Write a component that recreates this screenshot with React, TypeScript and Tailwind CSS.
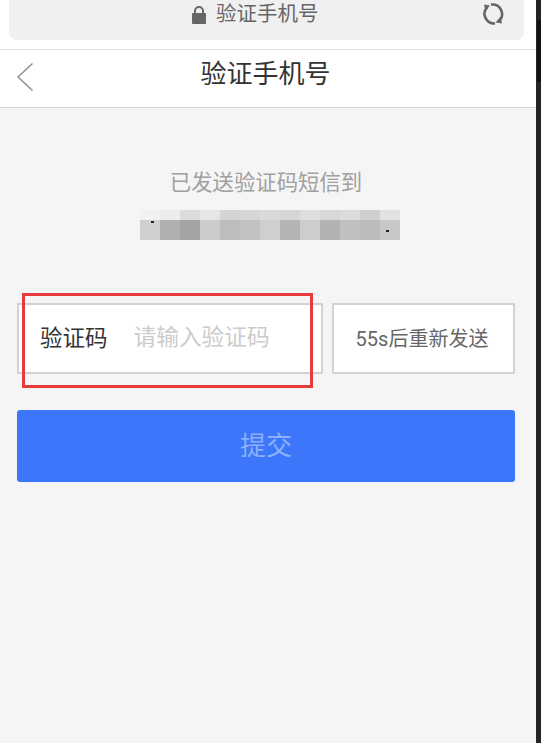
import React from 'react';

const cjk = "font-['Roboto','Noto_Sans_CJK_SC',sans-serif]";

// blurred phone number, pixel blocks
const topRow = ['#f1f1f1', '#ececec', '#dcdcdc', '#e6e6e6', '#d4d4d4', '#d6d6d6', '#dadada', '#d6d6d6', '#dedede', '#d8d8d8', '#dcdcdc', '#cfcfcf', '#e2e2e2'];
const bottomRow = ['#d0d0d0', '#b0b0b0', '#a4a4a4', '#cccccc', '#bdbdbd', '#c2c2c2', '#cfcfcf', '#b4b4b4', '#cdcdcd', '#b2b2b2', '#c0c0c0', '#bcbcbc', '#c8c8c8'];

const App: React.FC = () => {
  return (
    <div className={`${cjk} w-[541px] h-[743px] flex overflow-hidden bg-[#242424]`}>
      <div className="w-[536px] shrink-0 flex flex-col bg-[#f5f5f5]">
        <div className="bg-white h-[50px] shrink-0 pl-[9px] pr-[12px] border-b border-[#e4e4e4]">
          <div className="h-[40px] rounded-b-lg bg-[#f0f0f0] flex items-center pl-[183px] pr-[19px]">
            <div className="flex items-center gap-[10px] text-[20.5px] text-[#666666] pb-[11px]">
              <svg width="14" height="20" viewBox="0 0 14 20">
                <path d="M3 9V6a4 4 0 0 1 8 0v3" fill="none" stroke="#666666" strokeWidth="2" />
                <rect x="0" y="8" width="14" height="11" rx="1" fill="#666666" />
              </svg>
              <span>验证手机号</span>
            </div>
            <svg className="ml-auto mb-[12px]" width="24" height="24" viewBox="0 0 24 24" fill="none">
              <path d="M6 5.5A9.6 9.6 0 0 0 14 21.4" stroke="#666666" strokeWidth="2.6" />
              <path d="M10 2.6A9.6 9.6 0 0 1 19 18" stroke="#666666" strokeWidth="2.6" />
              <path d="M3 2.5l6 1-4.5 5.5z" fill="#666666" />
              <path d="M21 21.5l-6.5-1 5-6z" fill="#666666" />
            </svg>
          </div>
        </div>

        <div className="relative h-[58px] shrink-0 bg-white border-b border-[#d6d6d6] flex items-center justify-center pr-[5px]">
          <svg className="absolute left-[16px] top-[12px]" width="18" height="30" viewBox="0 0 18 30" fill="none">
            <path d="M16.5 1.5 2 15l14.5 13.5" stroke="#8f8f8f" strokeWidth="1.5" />
          </svg>
          <span className="text-[26px] text-[#333333] pb-[8px]">验证手机号</span>
        </div>

        <div className="flex-1 pl-[17px] pr-[21px]">
          <p className="mt-[60px] text-center text-[21.4px] leading-[30px] text-[#a0a0a0]">已发送验证码短信到</p>

          <div className="relative mt-[12px] ml-[123px] w-[260px] flex flex-col">
            <div className="flex h-[10px]">
              {topRow.map((c, i) => (
                <div key={i} className="w-[20px]" style={{ background: c }} />
              ))}
            </div>
            <div className="flex h-[20px]">
              {bottomRow.map((c, i) => (
                <div key={i} className="w-[20px]" style={{ background: c }} />
              ))}
            </div>
            <div className="absolute left-[11px] top-[11px] w-[3px] h-[2px] bg-[#222222]" />
            <div className="absolute left-[246px] top-[20px] w-[3px] h-[2px] bg-[#222222]" />
          </div>

          <div className="mt-[63px] flex gap-[9px] h-[71px]">
            <div className="relative w-[306px] bg-white border-2 border-[#d2d2d2] flex items-center">
              <span className="ml-[21px] text-[22.5px] text-[#333333]">验证码</span>
              <span className="ml-[26px] text-[22.7px] text-[#cccccc]">请输入验证码</span>
              <div className="absolute left-[3px] -top-[12px] w-[291px] h-[95px] border-[3px] border-[#e63c3c]" />
            </div>
            <div className="w-[183px] bg-white border-2 border-[#d2d2d2] flex items-center justify-center pr-[3px] text-[20px] text-[#666666]">
              55s后重新发送
            </div>
          </div>

          <div className="mt-[36px] h-[72px] rounded-[3px] bg-[#3b76fb] flex items-center justify-center text-[26px] text-[#8db0f9]">
            提交
          </div>
        </div>
      </div>
      <div className="flex-1 flex justify-end">
        <div className="w-[4px] h-[62px] mt-[20px] bg-[#14110f]" />
      </div>
    </div>
  );
};

export default App;
